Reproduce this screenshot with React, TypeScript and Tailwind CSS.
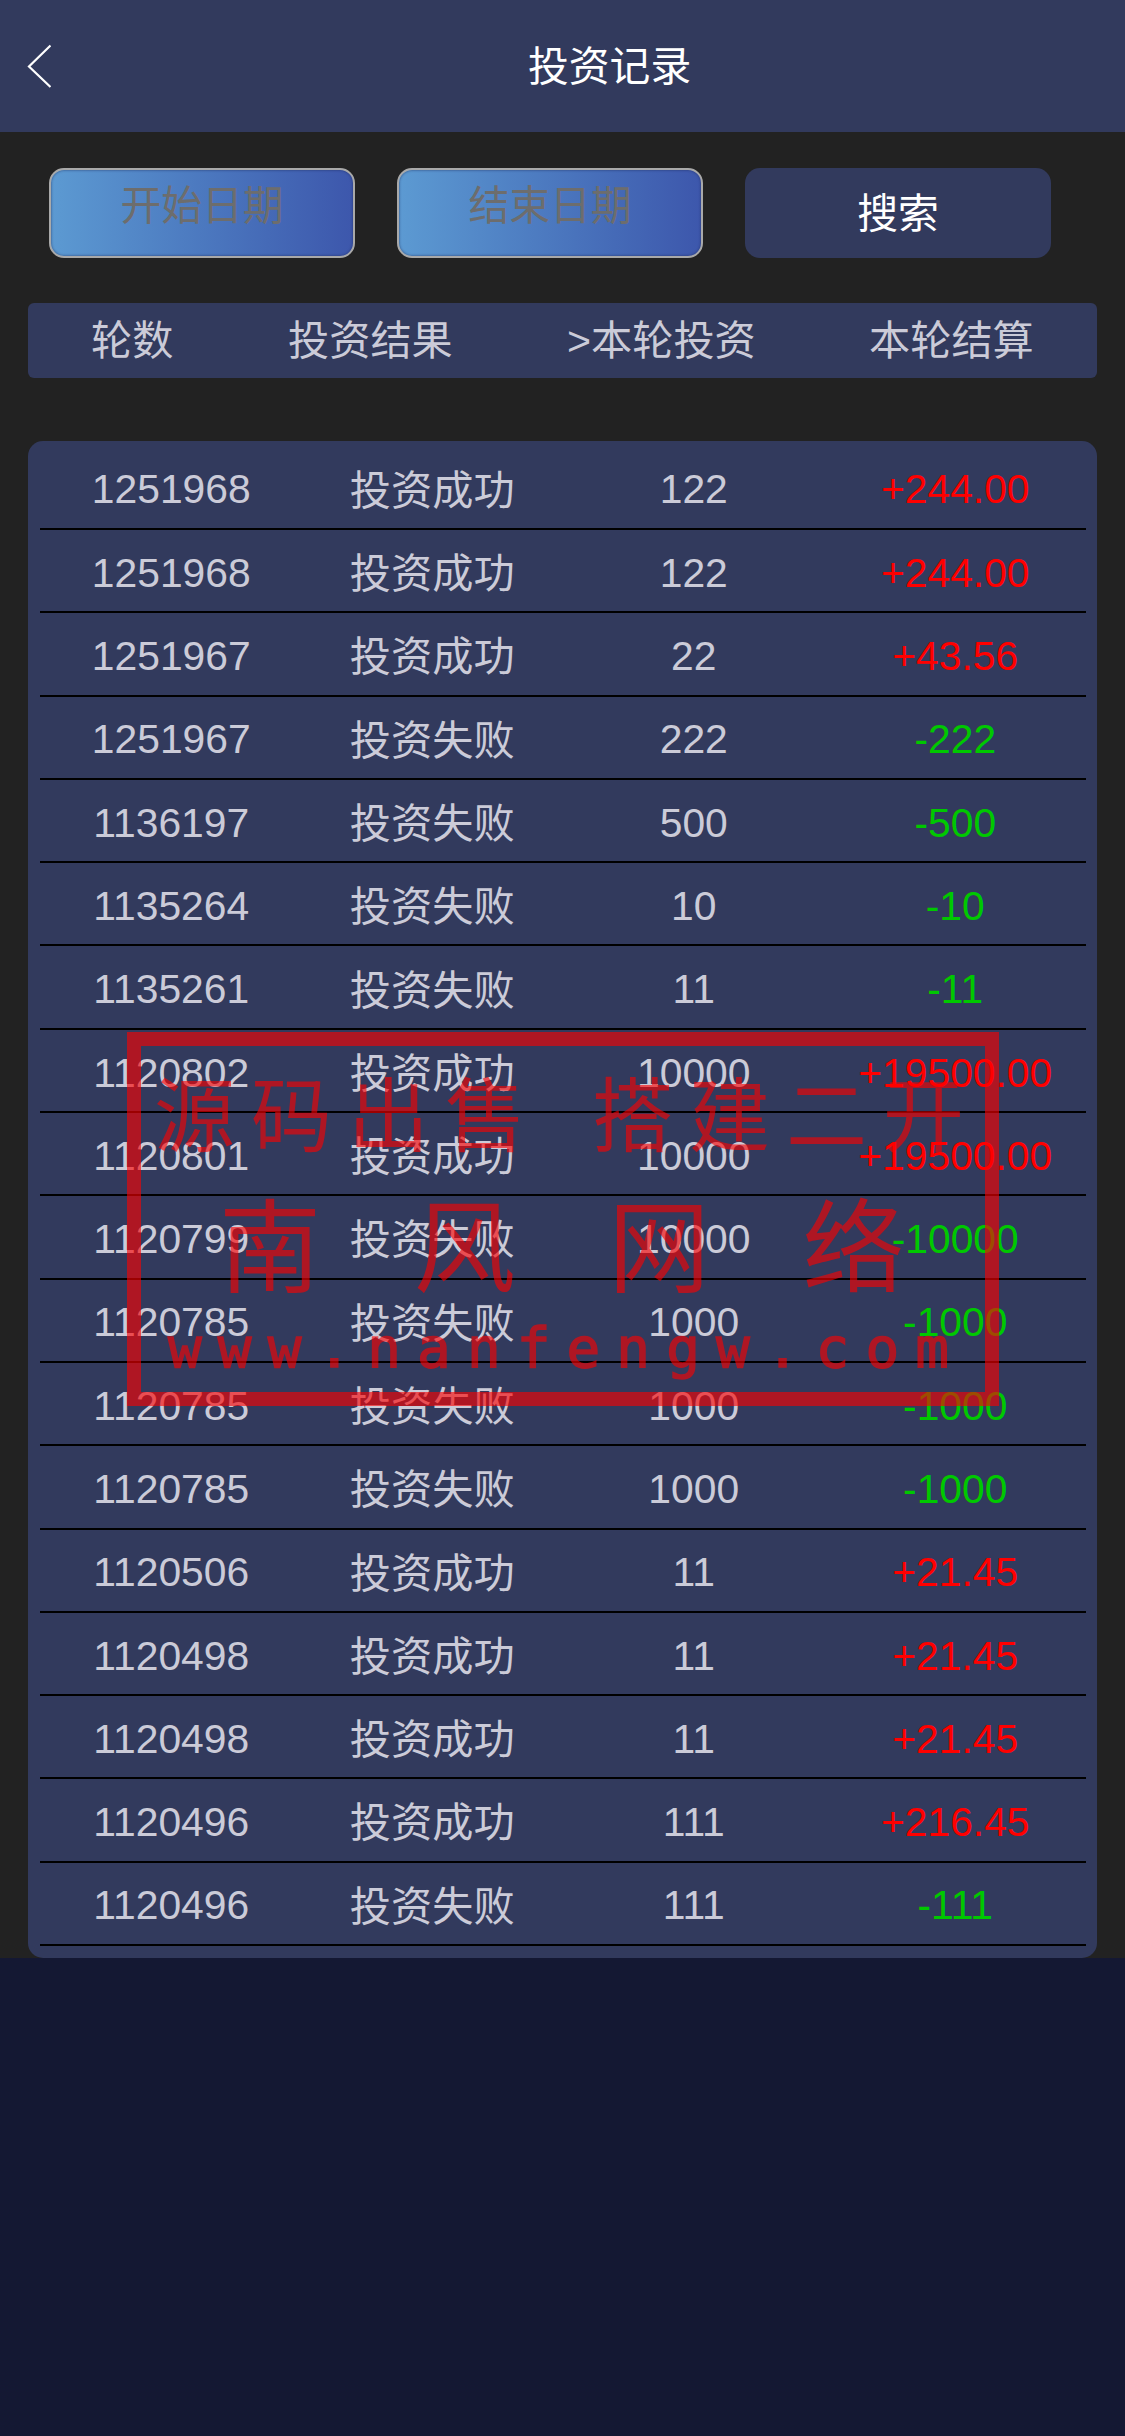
type BetRecord = {
  round: string;
  win: boolean;
  amount: string;
  settle: string;
};

const records: BetRecord[] = [
  { round: "1251968", win: true, amount: "122", settle: "+244.00" },
  { round: "1251968", win: true, amount: "122", settle: "+244.00" },
  { round: "1251967", win: true, amount: "22", settle: "+43.56" },
  { round: "1251967", win: false, amount: "222", settle: "-222" },
  { round: "1136197", win: false, amount: "500", settle: "-500" },
  { round: "1135264", win: false, amount: "10", settle: "-10" },
  { round: "1135261", win: false, amount: "11", settle: "-11" },
  { round: "1120802", win: true, amount: "10000", settle: "+19500.00" },
  { round: "1120801", win: true, amount: "10000", settle: "+19500.00" },
  { round: "1120799", win: false, amount: "10000", settle: "-10000" },
  { round: "1120785", win: false, amount: "1000", settle: "-1000" },
  { round: "1120785", win: false, amount: "1000", settle: "-1000" },
  { round: "1120785", win: false, amount: "1000", settle: "-1000" },
  { round: "1120506", win: true, amount: "11", settle: "+21.45" },
  { round: "1120498", win: true, amount: "11", settle: "+21.45" },
  { round: "1120498", win: true, amount: "11", settle: "+21.45" },
  { round: "1120496", win: true, amount: "111", settle: "+216.45" },
  { round: "1120496", win: false, amount: "111", settle: "-111" },
];

const Header = () => {
  return (
    <header className="flex h-[132px] items-center bg-[#323a5d] text-white">
      <svg className="ml-[27px] h-11 w-6" viewBox="0 0 24 44" fill="none" stroke="currentColor" strokeWidth="2.2">
        <path d="M23.5 1.5 L2 22.5 L23.5 43" />
      </svg>
      <h1 className="ml-[477px] pt-[2px] leading-none">投资记录</h1>
    </header>
  );
};

const DateField = ({ label }: { label: string }) => {
  return (
    <div className="flex h-[90px] w-[306px] justify-center rounded-[15px] border-2 border-[#a9a9a9] bg-linear-to-r from-[#5c9ad2] to-[#3d57ac] pt-[16px] leading-none text-[#6d6d6d] shadow-[inset_0_0_2px_1px_rgba(30,40,90,0.35)]">
      {label}
    </div>
  );
};

const Watermark = () => {
  return (
    <div className="pointer-events-none absolute top-[1032px] left-[127px] h-[374px] w-[872px] border-[14px] border-[#ff0000] font-['KaiTi','Noto_Sans_CJK_SC',sans-serif] whitespace-nowrap text-[#ff0000] opacity-[0.61]">
      <div className="mt-[20px] ml-[13px] flex gap-[50px] text-[81px] leading-[88px] tracking-[16px]">
        <span>源码出售</span>
        <span>搭建二开</span>
      </div>
      <div className="mt-[32px] ml-[78px] text-[102px] leading-[110px] tracking-[92.5px]">南风网络</div>
      <div className="mt-[20px] ml-[27px] font-['DejaVu_Sans_Mono',monospace] text-[56px] leading-[64px] tracking-[16.1px] [-webkit-text-stroke:1.5px_#ff0000]">
        www.nanfengw.com
      </div>
    </div>
  );
};

const App = () => {
  return (
    <div className="relative min-h-[2436px] w-[1125px] overflow-hidden bg-[#141833] font-['Liberation_Sans','Noto_Sans_CJK_SC',sans-serif] text-[40.8px] text-[#cbcbd8]">
      <Header />
      <main className="bg-[#222222] px-7 pt-9">
        <div className="flex gap-[42px] pl-[21px]">
          <DateField label="开始日期" />
          <DateField label="结束日期" />
          <button className="h-[90px] w-[306px] rounded-[15px] bg-[#323a5d] pt-[2px] leading-none text-white">搜索</button>
        </div>

        <div className="mt-[45px] flex h-[75px] items-center rounded-md bg-[#323a5d] pt-[2px] text-[41.2px] leading-none">
          <span className="ml-[63px] w-[197px]">轮数</span>
          <span className="w-[279px]">投资结果</span>
          <span className="w-[302px]">&gt;本轮投资</span>
          <span>本轮结算</span>
        </div>

        <div className="mt-[63px] h-[1517px] rounded-[15px] bg-[#323a5d] pt-[5.7px] pr-[11px] pl-3">
          {records.map((item, index) => (
            <div key={index} className="grid h-[83.3px] grid-cols-4 items-center border-b-2 border-black pt-[5px] text-center leading-none">
              <span className="pl-px">{item.round}</span>
              <span className="pt-[3px] text-[41.2px]">{item.win ? "投资成功" : "投资失败"}</span>
              <span>{item.amount}</span>
              <span className={item.win ? "text-[#ff0000]" : "text-[#00c800]"}>{item.settle}</span>
            </div>
          ))}
        </div>
      </main>
      <Watermark />
    </div>
  );
};

export default App;
